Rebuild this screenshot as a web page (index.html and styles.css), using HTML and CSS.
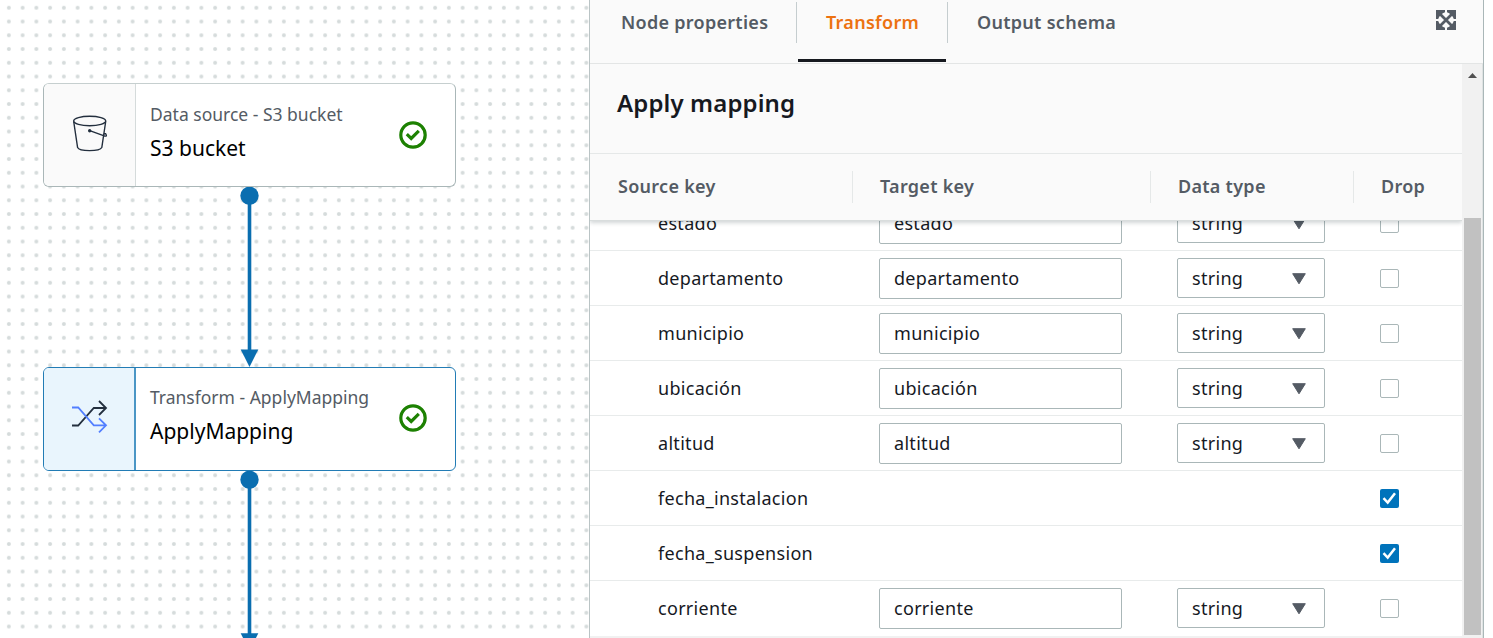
FILE: index.html
```
<!DOCTYPE html>
<html lang="en">
<head>
<meta charset="utf-8">
<title>Apply mapping</title>
<link rel="stylesheet" href="styles.css">
</head>
<body>
<main class="studio">
  <section class="canvas">
    <svg class="grid" width="589" height="638">
      <defs>
        <pattern id="dots" x="2" y="0.9" width="13.75" height="13.75" patternUnits="userSpaceOnUse">
          <circle cx="6.875" cy="6.875" r="2" fill="#d5dbdb"/>
        </pattern>
      </defs>
      <rect width="589" height="638" fill="url(#dots)"/>
    </svg>
    <svg class="edges" width="589" height="638">
      <g fill="#0a6eb0">
        <rect x="247.7" y="196" width="3.6" height="160"/>
        <circle cx="249.5" cy="195.7" r="9.2"/>
        <path d="M240.7 349.5h17.6l-8.8 17.5z"/>
        <rect x="247.7" y="480" width="3.6" height="158"/>
        <circle cx="249.5" cy="479.7" r="9.2"/>
        <path d="M240.7 633.3h17.6l-8.8 17.5z"/>
      </g>
    </svg>
    <article class="node node-source">
      <div class="node-icon">
        <svg width="36" height="40" viewBox="0 0 36 40" fill="none" stroke="#232f3e" stroke-width="1.4">
          <ellipse cx="17.7" cy="8" rx="16" ry="4.7"/>
          <path d="M1.7 8.5 5.6 34.5C7.5 38.7 27.5 38.7 29.8 34.5L33.7 8.5"/>
          <path d="M17.7 17.7 31.5 22.6Q36 24.3 33.6 20.7L31.8 20.7"/>
          <circle cx="17.7" cy="17.7" r="1" fill="#232f3e"/>
        </svg>
      </div>
      <div class="node-text">
        <p class="node-kind">Data source - S3 bucket</p>
        <h3 class="node-name">S3 bucket</h3>
      </div>
      <svg class="node-status" width="28" height="28" viewBox="0 0 28 28" fill="none" stroke="#1d8102">
        <circle cx="14" cy="14" r="12.2" stroke-width="3.2"/>
        <path d="M7.8 13.2 12.2 17.4 19.8 9.9" stroke-width="3.2"/>
      </svg>
    </article>
    <article class="node node-transform">
      <div class="node-icon">
        <svg width="38" height="36" viewBox="0 0 38 36" fill="none" stroke-width="1.8">
          <path d="M2 27.5H8.2L23.8 10H36M29 3 36 10 29 17" stroke="#232f3e"/>
          <path d="M2 9.5H8.2L23.8 27.3H36M29 20.3 36 27.3 29 34.3" stroke="#527fff"/>
        </svg>
      </div>
      <div class="node-text">
        <p class="node-kind">Transform - ApplyMapping</p>
        <h3 class="node-name">ApplyMapping</h3>
      </div>
      <svg class="node-status" width="28" height="28" viewBox="0 0 28 28" fill="none" stroke="#1d8102">
        <circle cx="14" cy="14" r="12.2" stroke-width="3.2"/>
        <path d="M7.8 13.2 12.2 17.4 19.8 9.9" stroke-width="3.2"/>
      </svg>
    </article>
  </section>

  <section class="panel">
    <nav class="tabs">
      <div class="tab tab-props"><span>Node properties</span></div>
      <div class="tab tab-transform active"><span>Transform</span></div>
      <div class="tab tab-schema"><span>Output schema</span></div>
      <svg class="expand" width="20" height="20" viewBox="0 0 20 20">
        <path d="M3 3 17 17M17 3 3 17" stroke="#545b64" stroke-width="2.8"/>
        <path d="M0 0H9V2.2L6.8 3.2 3.2 6.8 2.2 9H0zM20 0V9H17.8L16.8 6.8 13.2 3.2 11 2.2V0zM0 20V11H2.2L3.2 13.2 6.8 16.8 9 17.8V20zM20 20H11V17.8L13.2 16.8 16.8 13.2 17.8 11H20z" fill="#545b64"/>
      </svg>
    </nav>
    <div class="content">
      <div class="mapping">
        <header class="head">
          <h2 class="title"><span>Apply mapping</span></h2>
          <div class="columns">
            <div class="col col-source"><span>Source key</span></div>
            <div class="col col-target"><span>Target key</span></div>
            <div class="col col-type"><span>Data type</span></div>
            <div class="col col-drop"><span>Drop</span></div>
          </div>
        </header>
        <div class="rows" id="rows"></div>
        <div class="strip"></div>
      </div>
      <div class="scrollbar">
        <svg class="up" width="9" height="5" viewBox="0 0 9 5"><path d="M0 5 4.5 0 9 5z" fill="#505050"/></svg>
        <div class="thumb"></div>
      </div>
    </div>
  </section>
</main>
<script src="rows.js"></script>
</body>
</html>
```
FILE: styles.css
```
* { box-sizing: border-box; }
body { margin: 0; font-family: "Noto Sans", "Open Sans", sans-serif; color: #16191f; background: #fff; }
h2, h3, p { margin: 0; }
.studio { display: flex; width: 1493px; height: 638px; overflow: hidden; }
.canvas { position: relative; width: 589px; height: 638px; overflow: hidden; }
.grid, .edges { position: absolute; left: 0; top: 0; }
.node { position: absolute; left: 43px; width: 413px; height: 104px; display: flex; background: #fff; border: 1.4px solid #aab7b8; border-top-color: #c6cfcf; border-radius: 6px; overflow: hidden; }
.node-source { top: 83px; }
.node-transform { top: 367px; border-color: #227cb5; }
.node-icon { width: 92px; padding-left: 1px; display: flex; align-items: center; justify-content: center; background: #fafafa; border-right: 1px solid #d5dbdb; }
.node-icon svg { margin-top: -4px; }
.node-transform .node-icon { padding: 0 1px 0 0; background: #e9f5fd; border-right: 2px solid #4b96c5; }
.node-transform .node-icon svg { margin-top: -6px; }
.node-text { flex: 1; padding: 17px 0 0 14px; white-space: nowrap; }
.node-transform .node-text { padding-top: 16px; }
.node-kind { font-size: 17.5px; line-height: 26px; color: #545b64; }
.node-name { font-size: 21px; line-height: 30px; font-weight: 400; color: #000; margin-top: 6px; }
.node-status { margin: 37px 28px 0 0; }
.node-transform .node-status { margin-top: 36px; }
.panel { width: 895px; height: 638px; display: flex; flex-direction: column; border-left: 1px solid #bac4c5; border-right: 1px solid #aab7b8; background: #fafafa; }
.tabs { height: 64px; display: flex; border-bottom: 1px solid #e3e5e5; white-space: nowrap; }
.tab { font-size: 18px; letter-spacing: .28px; font-weight: 600; line-height: 26px; color: #545b64; padding-top: 9px; height: 62px; }
.tab-props { width: 208px; padding-left: 31px; background: linear-gradient(#c5cdcf, #c5cdcf) 206px 2px / 1px 41px no-repeat; }
.tab-transform { width: 148px; padding-left: 28px; border-bottom: 3px solid #16191f; color: #ec7211; }
.tab-schema { width: 488px; padding-left: 31px; background: linear-gradient(#c5cdcf, #c5cdcf) 1px 2px / 1px 41px no-repeat; }
.expand { margin: 10px 0 0 2px; }
.content { flex: 1; display: flex; min-height: 0; }
.mapping { width: 872px; display: flex; flex-direction: column; overflow: hidden; background: #fff; }
.head { height: 157px; flex: none; z-index: 1; background: #fafafa; border-bottom: 1px solid #d9dddd; box-shadow: 0 2px 4px rgba(0, 28, 36, .18); }
.title { height: 90px; padding: 22px 0 0 27px; font-size: 24px; letter-spacing: .12px; line-height: 34px; font-weight: 600; border-bottom: 1px solid #e5e8e8; }
.columns { display: flex; height: 66px; padding-top: 17px; }
.col { height: 32px; padding-left: 28px; font-size: 18px; letter-spacing: .28px; line-height: 30px; font-weight: 600; color: #545b64; border-right: 1px solid #e5e8e8; white-space: nowrap; }
.col-source { width: 263px; }
.col-target { width: 298px; padding-left: 27px; }
.col-type { width: 203px; padding-left: 27px; }
.col-drop { border: 0; padding-left: 27px; }
.rows { margin-top: -25px; height: 440px; flex: none; }
.row { display: grid; grid-template-columns: 289px 298px 203px 1fr; height: 55px; align-items: center; border-bottom: 1px solid #e8ebeb; font-size: 18px; letter-spacing: .3px; }
.row:last-child { border-bottom-color: transparent; }
.key { padding-left: 68px; }
.input, .select { border: 1px solid #aab7b8; border-radius: 2px; display: flex; align-items: center; background: #fff; }
.input { width: 243px; height: 41px; margin-top: 1px; padding: 0 0 2px 14px; }
.select { width: 148px; height: 40px; justify-content: space-between; padding: 0 18px 0 14px; }
.select svg { margin-top: 1px; }
.check { width: 19px; height: 19px; border: 1.5px solid #aab7b8; border-radius: 2px; }
.check.on { border: 0; background: #0073bb; }
.check svg { display: block; }
.strip { flex: 1; background: #f1f1f1; }
.scrollbar { width: 21px; background: #f1f1f1; border-right: 1px solid #dfe3e3; display: flex; flex-direction: column; padding-left: 2px; }
.up { margin: 9px 0 0 4px; }
.thumb { width: 17px; height: 417px; margin-top: 140px; background: #c1c1c1; }
```
FILE: rows.js
```
const keys = [
  ["estado", false],
  ["departamento", false],
  ["municipio", false],
  ["ubicación", false],
  ["altitud", false],
  ["fecha_instalacion", true],
  ["fecha_suspension", true],
  ["corriente", false],
];

const caret = '<svg width="14" height="12" viewBox="0 0 14 12"><path d="M.7.7H13.3L7 10.8z" fill="#545b64" stroke="#545b64" stroke-linejoin="round"/></svg>';
const tick = '<svg width="19" height="19" viewBox="0 0 19 19"><path d="M3.5 9.2 7.7 13.5 15 4.2" fill="none" stroke="#fff" stroke-width="2.5"/></svg>';

document.getElementById("rows").innerHTML = keys.map(([key, dropped]) => `
  <div class="row">
    <div class="key"><span>${key}</span></div>
    <div>${dropped ? "" : `<div class="input"><span>${key}</span></div>`}</div>
    <div>${dropped ? "" : `<div class="select"><span>string</span>${caret}</div>`}</div>
    <div class="check${dropped ? " on" : ""}">${dropped ? tick : ""}</div>
  </div>`).join("");
```
